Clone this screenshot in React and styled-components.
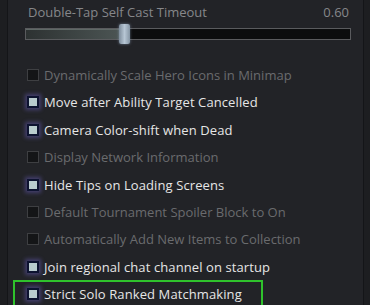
import React from "react";
import styled, { createGlobalStyle } from "styled-components";

const GlobalStyle = createGlobalStyle`
  html, body {
    margin: 0;
    padding: 0;
    background: #1d1e21;
  }
  body {
    font-family: "Open Sans", "Liberation Sans", sans-serif;
  }
`;

const options = [
  { label: "Dynamically Scale Hero Icons in Minimap", checked: false },
  { label: "Move after Ability Target Cancelled", checked: true },
  { label: "Camera Color-shift when Dead", checked: true },
  { label: "Display Network Information", checked: false },
  { label: "Hide Tips on Loading Screens", checked: true },
  { label: "Default Tournament Spoiler Block to On", checked: false },
  { label: "Automatically Add New Items to Collection", checked: false },
  { label: "Join regional chat channel on startup", checked: true },
  { label: "Strict Solo Ranked Matchmaking", checked: true, highlight: true },
];

function App() {
  const value = 0.6;
  return (
    <>
      <GlobalStyle />
      <Screen>
        <Panel>
          <SliderBlock>
            <SliderHeader>
              <span>Double-Tap Self Cast Timeout</span>
              <span>{value.toFixed(2)}</span>
            </SliderHeader>
            <Track>
              <Fill style={{ width: `${(value / 2.1) * 100}%` }} />
              <Thumb />
            </Track>
          </SliderBlock>
          <List>
            {options.map((o) => (
              <Row key={o.label} highlight={o.highlight}>
                <Box checked={o.checked} />
                <Label checked={o.checked}>{o.label}</Label>
              </Row>
            ))}
          </List>
        </Panel>
      </Screen>
    </>
  );
}

const Screen = styled.div`
  width: 370px;
  height: 305px;
  overflow: hidden;
  background: #1d1e21;
  padding-left: 7px;
  box-sizing: border-box;
`;

const Panel = styled.div`
  width: 357px;
  height: 330px;
  box-sizing: border-box;
  border-left: 1px solid #141518;
  border-right: 1px solid #141518;
  background: #222327;
  padding: 0 12px 0 5px;
`;

const SliderBlock = styled.div`
  padding: 3px 0 0 12px;
  height: 60px;
  box-sizing: border-box;
`;

const SliderHeader = styled.div`
  display: flex;
  justify-content: space-between;
  font-size: 13px;
  line-height: 19px;
  color: #86878a;
  padding: 0 2px 0 3px;
`;

const Track = styled.div`
  position: relative;
  margin-top: 6px;
  height: 12px;
  box-sizing: border-box;
  border: 1px solid #5a5b5e;
  background: #0c0d0e;
`;

const Fill = styled.div`
  height: 100%;
  background: linear-gradient(90deg, #2d3232 0%, #4b5453 100%);
  box-shadow: inset 0 1px 0 #5f6866;
`;

const Thumb = styled.div`
  position: absolute;
  left: 93px;
  top: -5px;
  width: 11px;
  height: 20px;
  border-radius: 2px;
  background: linear-gradient(90deg, #7d8c9b 0%, #b7c6d4 50%, #8595a4 100%);
  box-shadow: 0 0 3px rgba(150, 170, 200, 0.6);
`;

const List = styled.div`
  display: flex;
  flex-direction: column;
  gap: 7.4px;
  padding-top: 5px;
`;

const Row = styled.div`
  position: relative;
  display: flex;
  align-items: center;
  gap: 5px;
  height: 20px;
  padding-left: 14px;

  &::before {
    content: "";
    display: ${(p) => (p.highlight ? "block" : "none")};
    position: absolute;
    left: 0;
    top: -4px;
    width: 250px;
    height: 40px;
    box-sizing: border-box;
    border: 2px solid #2fc22c;
  }
`;

const Box = styled.div`
  width: 12px;
  height: 12px;
  flex-shrink: 0;
  box-sizing: border-box;
  border: ${(p) => (p.checked ? "2px solid #0d1330" : "1px solid #3e3f42")};
  background: ${(p) => (p.checked ? "#b9ccce" : "#141517")};
  box-shadow: ${(p) =>
    p.checked ? "0 0 4px 2px rgba(110, 100, 200, 0.45)" : "none"};
`;

const Label = styled.span`
  font-size: 13px;
  line-height: 20px;
  white-space: nowrap;
  letter-spacing: ${(p) => (p.checked ? "0.1px" : "0")};
  color: ${(p) => (p.checked ? "#e6e6e6" : "#6a6b6e")};
`;

export default App;
